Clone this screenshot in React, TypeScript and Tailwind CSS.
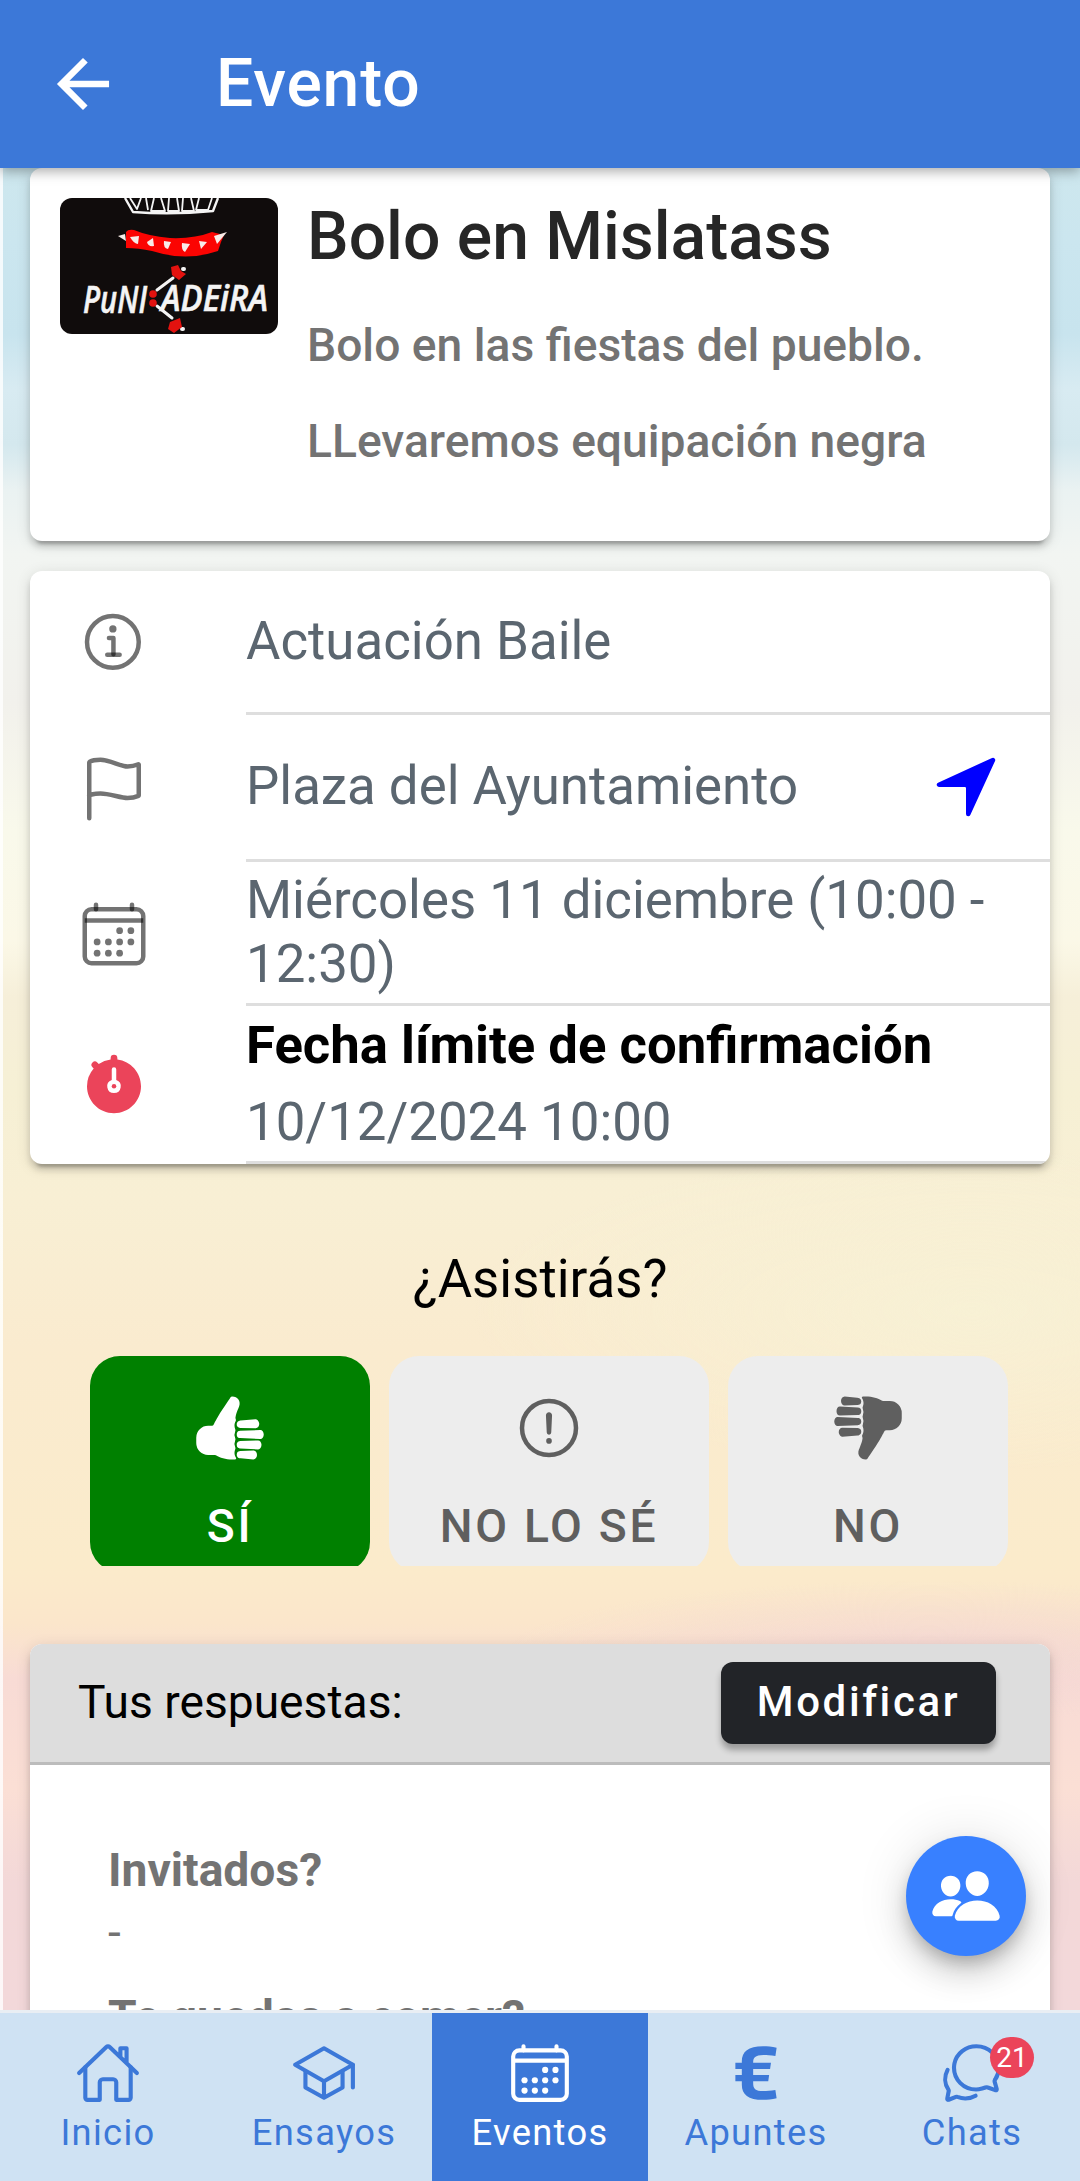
import type { ReactNode } from 'react';
import { IoLogoEuro, IoMdArrowBack } from 'react-icons/io';
import {
    IoAlertCircleOutline,
    IoCalendarOutline,
    IoChatbubblesOutline,
    IoFlagOutline,
    IoHomeOutline,
    IoInformationCircleOutline,
    IoNavigate,
    IoPeople,
    IoSchoolOutline,
    IoStopwatch,
    IoThumbsDown,
    IoThumbsUp,
} from 'react-icons/io5';

const CARD_SHADOW = 'shadow-[0_9px_3px_-6px_rgba(0,0,0,0.2),0_6px_6px_0_rgba(0,0,0,0.14),0_3px_15px_0_rgba(0,0,0,0.12)]';

// Sunset sky: pale blue at the top, cream in the middle, pink clouds at the bottom
const SKY = [
    'radial-gradient(ellipse 420px 70px at 86% 80.5%, rgba(243,214,212,0.85), rgba(243,214,212,0) 100%)',
    'radial-gradient(ellipse 500px 160px at 90% 62%, rgba(247,242,214,0.8), rgba(247,242,214,0) 100%)',
    'linear-gradient(180deg,#cde7ee 0%,#cbe6ef 4%,#c8e4ee 9%,#d8ebf2 12%,#d4e8ee 15%,#eaf2f2 17.5%,#f2f5f2 21%,#f2f1ec 29%,#f9f9eb 36%,#fbf8e7 42%,#f6efd9 45%,#f6f0d5 50%,#f8efd4 56%,#faebcf 64%,#fbebcb 76%,#fbe6cb 79%,#f8dbd5 82%,#fbdfd5 88%,#f3d8d8 93%,#f3d8da 100%)',
].join(',');

const TABS = [
    { label: 'Inicio', icon: IoHomeOutline },
    { label: 'Ensayos', icon: IoSchoolOutline },
    { label: 'Eventos', icon: IoCalendarOutline, active: true },
    { label: 'Apuntes', icon: IoLogoEuro },
    { label: 'Chats', icon: IoChatbubblesOutline, badge: 21 },
];

const ANSWERS = [
    { label: 'SÍ', icon: IoThumbsUp, box: 'w-[280px] bg-[#008000] text-white' },
    { label: 'NO LO SÉ', icon: IoAlertCircleOutline, box: 'w-[320px] bg-[#ededed] text-[#5f5f5f]' },
    { label: 'NO', icon: IoThumbsDown, box: 'w-[280px] bg-[#ededed] text-[#5f5f5f]' },
];

function BandLogo() {
    return (
        <svg viewBox="0 0 218 136" className="h-[136px] w-[218px] shrink-0 rounded-xl bg-[#100c0c]">
            {/* Teeth */}
            <g fill="none" stroke="#f4f4f4" strokeWidth="1.8" strokeLinejoin="round">
                <path d="M65 0L73 14Q112 17 153 13L158 0" strokeWidth="2.4" />
                <path d="M70 0L77 11L81 0M86 0L88 12M94 0L91 13L105 13L101 0M109 0L108 13L119 13L117 0M123 0L122 13L134 13L131 0M139 0L136 12L148 12L152 0" />
            </g>
            {/* Spiked collar */}
            <path d="M66 34Q68 31 74 32Q88 38 110 40Q134 41 152 34L164 37L161 44L158 53Q126 64 92 53Q78 50 66 50Z" fill="#fb0402" />
            <g fill="#f8ece8">
                <path d="M58 38L65 36L66 43Z" />
                <path d="M70 39L79 38L78 46Q74 46 70 39Z" />
                <path d="M87 44L93 40L94 48Q88 49 87 44Z" />
                <path d="M104 43L111 44L108 51Q103 50 104 43Z" />
                <path d="M122 45L130 46L125 54Q121 52 122 45Z" />
                <path d="M139 43L147 44L141 51Z" />
                <path d="M154 38L167 34L157 46Z" />
            </g>
            {/* Name */}
            <g fill="#f4f4f4" stroke="#f4f4f4" strokeWidth="0.6" fontFamily="'Open Sans', sans-serif" fontStyle="italic" fontWeight="600">
                <text x="23" y="115" fontSize="38" textLength="64" lengthAdjust="spacingAndGlyphs">PuNI</text>
                <text x="101" y="113" fontSize="36" textLength="107" lengthAdjust="spacingAndGlyphs">ADEiRA</text>
            </g>
            {/* Drumsticks crossing the name */}
            <g stroke="#f4f4f4" strokeWidth="3" strokeLinecap="round">
                <path d="M97 92L113 80M97 108L112 120" />
                <path d="M123 71h1M122 131h1" strokeWidth="4" />
            </g>
            <g fill="#e3120f">
                <circle cx="93" cy="96" r="3.8" />
                <circle cx="93" cy="105" r="3.8" />
                <path d="M111 69L118 67L121 73L126 76L119 82L112 77Z" />
                <path d="M110 124L120 120L122 129L114 135L108 131Z" />
            </g>
        </svg>
    );
}

function Row({ icon, className, children, action }: { icon: ReactNode; className: string; children: ReactNode; action?: ReactNode }) {
    return (
        <div className={`flex ${className}`}>
            <div className="flex w-[216px] shrink-0 items-center pl-12 text-[72px] text-black/55">{icon}</div>
            <div className="flex flex-1 items-center justify-between border-b-[3px] border-[#dedede] pr-12">
                <div className="pb-0.5 text-[52.8px] leading-[64px] text-[#5b6670]">{children}</div>
                {action}
            </div>
        </div>
    );
}

export default function App() {
    return (
        <div className="relative flex h-[2181px] w-[1080px] flex-col overflow-hidden font-[Roboto,sans-serif]">
            <header className="z-10 flex h-[168px] shrink-0 items-center bg-[#3c78d8] pl-[44px] text-white shadow-[0_3px_12px_rgba(0,0,0,0.35)]">
                <IoMdArrowBack className="size-[78px]" />
                <h1 className="ml-[94px] text-[66px] font-medium leading-none tracking-[0.0125em]">Evento</h1>
            </header>

            <main className="flex min-h-0 flex-1 flex-col overflow-hidden border-l-3 border-white/80 pr-[30px] pl-[27px]" style={{ background: SKY }}>
                {/* Event summary */}
                <section className={`flex h-[373px] shrink-0 gap-[29px] rounded-xl bg-white px-[30px] pt-[30px] ${CARD_SHADOW}`}>
                    <BandLogo />
                    <div>
                        <h2 className="-mt-px text-[66px] font-medium leading-[79px] text-[#262626]">Bolo en Mislatass</h2>
                        <p className="mt-[41px] text-[46.2px] font-medium leading-[56px] text-[#737373]">Bolo en las fiestas del pueblo.</p>
                        <p className="mt-[40px] text-[46.2px] font-medium leading-[56px] text-[#737373]">LLevaremos equipación negra</p>
                    </div>
                </section>

                {/* Event details */}
                <section className={`mt-[30px] shrink-0 overflow-hidden rounded-xl bg-white ${CARD_SHADOW}`}>
                    <Row className="h-[144px]" icon={<IoInformationCircleOutline />}>Actuación Baile</Row>
                    <Row className="h-[147px]" icon={<IoFlagOutline />} action={<IoNavigate className="size-[72px] text-[#0000ff]" />}>
                        Plaza del Ayuntamiento
                    </Row>
                    <Row className="h-[144px]" icon={<IoCalendarOutline />}>Miércoles 11 diciembre (10:00 - 12:30)</Row>
                    <Row className="h-[158px]" icon={<IoStopwatch className="-mt-0.5 text-[#eb445a]" />}>
                        <p className="mb-[13px] pt-0.5 text-[52.7px] font-bold text-black">Fecha límite de confirmación</p>
                        <p>10/12/2024 10:00</p>
                    </Row>
                </section>

                {/* Attendance */}
                <p className="mt-[83px] shrink-0 text-center text-[52.8px] leading-[64px] text-black">¿Asistirás?</p>
                <div className="mt-[45px] ml-[60px] flex h-[210px] shrink-0 gap-[19px] overflow-hidden">
                    {ANSWERS.map(({ label, icon: Icon, box }) => (
                        <button key={label} className={`flex h-[216px] shrink-0 flex-col items-center rounded-[30px] pt-9 ${box}`}>
                            <Icon className="size-[72px]" />
                            <span className="mt-[34px] text-[46.2px] font-medium leading-[56px] tracking-[0.058em]">{label}</span>
                        </button>
                    ))}
                </div>

                {/* User answers */}
                <section className={`mt-[78px] h-[600px] shrink-0 overflow-hidden rounded-xl bg-white ${CARD_SHADOW}`}>
                    <div className="flex h-[121px] items-center justify-between border-b-[3px] border-[#bcbcbc] bg-[#dddddd] pr-[54px] pl-12">
                        <span className="pb-0.5 text-[46.2px] leading-[56px] text-black">Tus respuestas:</span>
                        <button className="h-[82px] w-[275px] rounded-xl bg-[#222428] pb-1 text-[42px] font-medium tracking-[0.062em] text-white shadow-[0_6px_6px_rgba(0,0,0,0.3)]">
                            Modificar
                        </button>
                    </div>
                    <div className="pt-[77px] pl-[78px] text-[46.2px] leading-[56px] text-[#737373]">
                        <p className="font-bold">Invitados?</p>
                        <p className="mt-[6px]">-</p>
                        <p className="mt-[29px] font-bold">Te quedas a comer?</p>
                    </div>
                </section>
            </main>

            <button className="absolute top-[1836px] left-[906px] flex size-[120px] items-center justify-center rounded-full bg-[#3880ff] text-[72px] text-white shadow-[0_9px_15px_-3px_rgba(0,0,0,0.2),0_18px_30px_0_rgba(0,0,0,0.14),0_3px_54px_0_rgba(0,0,0,0.12)]">
                <IoPeople />
            </button>

            <nav className="z-10 flex h-[171px] shrink-0 border-t-[3px] border-[#e9eef3] bg-[#cfe2f3]">
                {TABS.map(({ label, icon: Icon, active, badge }) => (
                    <a key={label} className={`relative flex flex-1 flex-col items-center pt-[27px] ${active ? 'bg-[#3c78d8] text-white' : 'text-[#3c78d8]'}`}>
                        <Icon className="size-[66px]" />
                        <span className="mt-[5px] text-[36.3px] leading-[43px] tracking-[0.036em]">{label}</span>
                        {badge && (
                            <span className="absolute top-[24px] left-[126px] flex h-[41px] w-[44px] items-center justify-center rounded-full bg-[#eb445a] text-[28px] text-white">
                                {badge}
                            </span>
                        )}
                    </a>
                ))}
            </nav>
        </div>
    );
}
